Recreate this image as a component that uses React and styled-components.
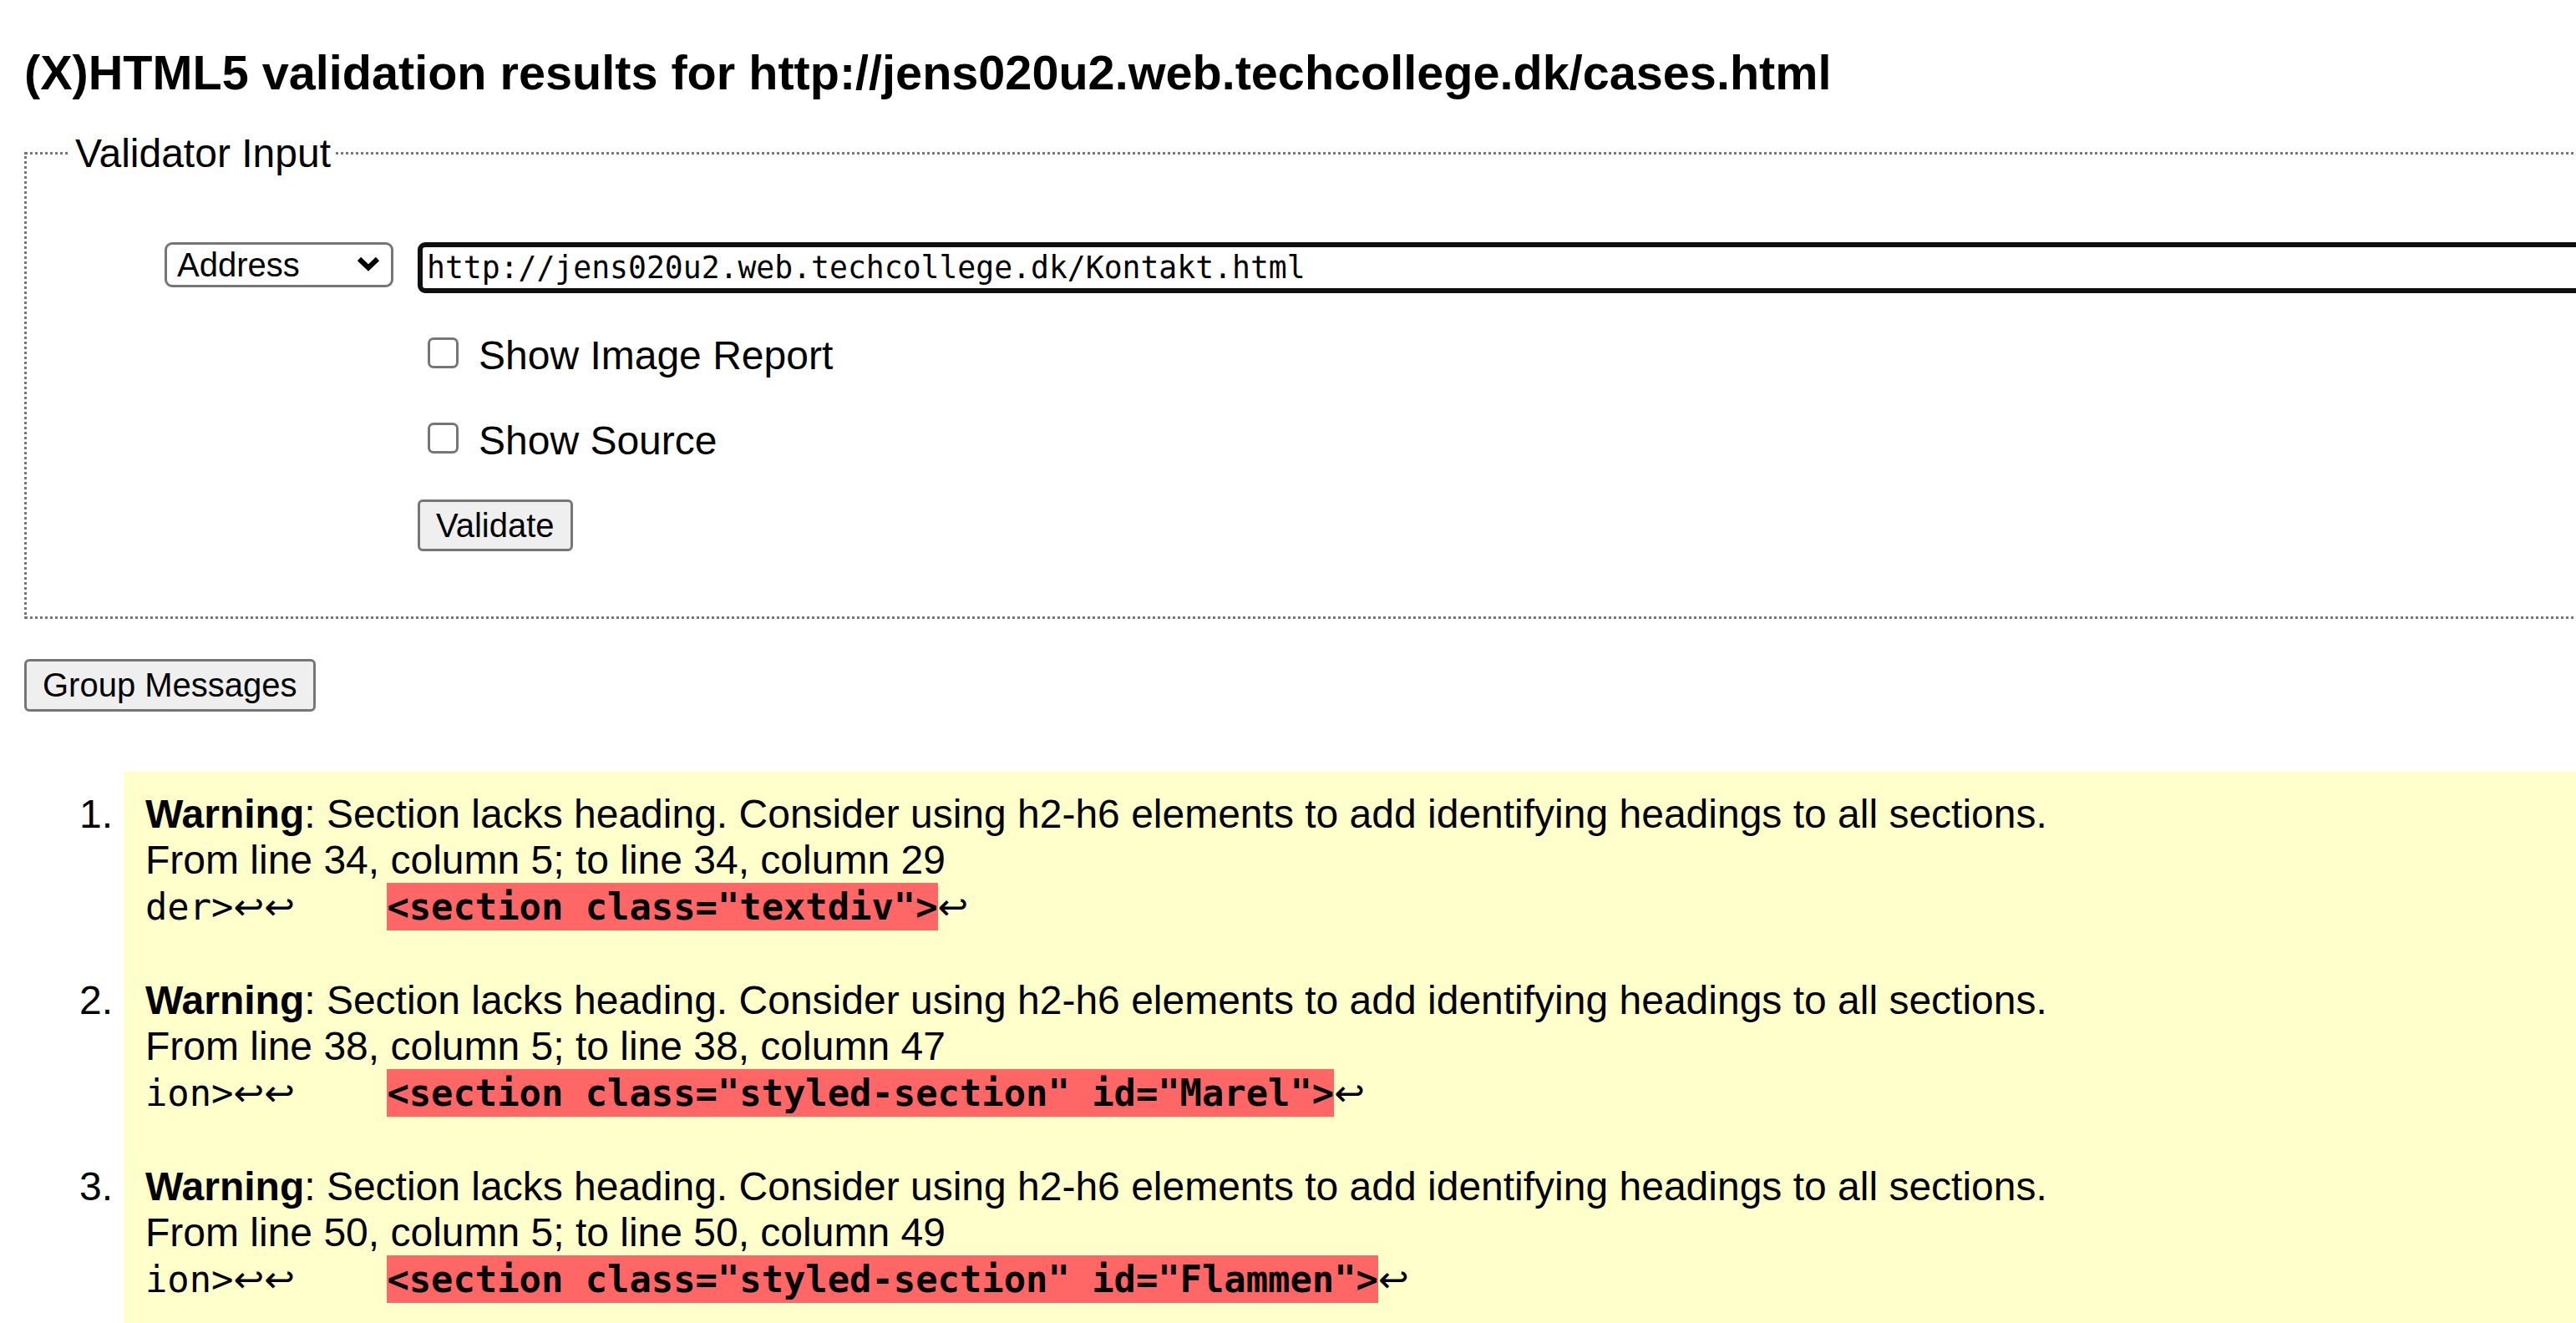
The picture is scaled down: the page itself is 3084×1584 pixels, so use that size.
import React from 'react';
import styled, { createGlobalStyle } from 'styled-components';

const GlobalStyle = createGlobalStyle`
  html, body {
    margin: 0;
    background: #fff;
    overflow: hidden;
  }
  body {
    font-family: "Liberation Sans", Arial, sans-serif;
    color: #000;
  }
`;

const Page = styled.div`
  width: 3400px;
  box-sizing: border-box;
  padding: 55px 0 0 29px;
`;

const Title = styled.h2`
  margin: 0 0 37px;
  font-size: 57.6px;
  font-weight: bold;
  line-height: 64px;
`;

const Fieldset = styled.fieldset`
  margin: 0 29px 0 0;
  padding: 0 0 78px;
  border: 3px dotted #767676;
  min-width: 0;
`;

const Legend = styled.legend`
  margin-left: 52px;
  padding: 0 6px;
  font-size: 48px;
  line-height: 55px;
`;

const FormGrid = styled.div`
  display: grid;
  grid-template-columns: auto 1fr;
  column-gap: 29px;
  align-items: start;
  padding: 79px 0 0 165px;
`;

const SelectWrap = styled.div`
  position: relative;
  width: 274px;
  height: 54px;
`;

const Select = styled.select`
  appearance: none;
  width: 100%;
  height: 100%;
  box-sizing: border-box;
  padding: 0 0 0 12px;
  border: 3px solid #767676;
  border-radius: 9px;
  background: #fff;
  color: #000;
  font-family: "Liberation Sans", Arial, sans-serif;
  font-size: 40px;
`;

const Chevron = styled.svg`
  position: absolute;
  top: 17px;
  right: 16px;
  width: 28px;
  height: 18px;
  pointer-events: none;
`;

const Controls = styled.div`
  display: flex;
  flex-direction: column;
  align-items: stretch;
`;

const AddressInput = styled.input`
  width: 100%;
  height: 61px;
  box-sizing: border-box;
  padding: 0 5px;
  border: 6px solid #101010;
  border-radius: 9px;
  outline: none;
  background: #fff;
  color: #000;
  font-family: "DejaVu Sans Mono", "Liberation Mono", monospace;
  font-size: 36.4px;
`;

const CheckRow = styled.label`
  display: flex;
  align-items: flex-start;
  height: 55px;
  margin-top: 47px;
  font-size: 48px;
  line-height: 55px;
`;

const Checkbox = styled.input.attrs({ type: 'checkbox' })`
  appearance: none;
  flex: none;
  width: 37px;
  height: 37px;
  box-sizing: border-box;
  margin: 6px 24px 0 12px;
  border: 3px solid #767676;
  border-radius: 7px;
  background: #fff;
`;

const Button = styled.button`
  align-self: flex-start;
  height: ${(p) => p.$height || 62}px;
  margin-top: ${(p) => p.$top || 0}px;
  padding: 0 19px;
  border: 3px solid #767676;
  border-radius: 6px;
  background: #efefef;
  color: #000;
  font-family: "Liberation Sans", Arial, sans-serif;
  font-size: 40px;
`;

const Messages = styled.ol`
  list-style: none;
  margin: 72px 0 0;
  padding: 0;
`;

const Item = styled.li`
  display: flex;
`;

const Number = styled.div`
  flex: none;
  width: 119px;
  box-sizing: border-box;
  padding: 23px 13px 0 0;
  text-align: right;
  font-size: 48px;
  line-height: 55px;
`;

const Body = styled.div`
  flex: 1;
  background: #ffffcc;
  padding: 23px 24px 33px 26px;
  font-size: 48px;
`;

const Line = styled.div`
  line-height: 55px;
  white-space: nowrap;
`;

const Extract = styled.div`
  font-family: "DejaVu Sans Mono", "Liberation Mono", monospace;
  font-size: 43.8px;
  line-height: 57px;
  white-space: pre;
`;

const Mark = styled.b`
  display: inline-block;
  margin-left: 5px;
  background: #ff6666;
  font-weight: bold;
`;

// the line-break arrows fall back to a proportional font in the original
const Return = styled.span`
  font-family: "DejaVu Sans", sans-serif;
  font-weight: normal;
`;

const messages = [
  {
    from: 'From line 34, column 5; to line 34, column 29',
    before: 'der>',
    mark: '<section class="textdiv">',
  },
  {
    from: 'From line 38, column 5; to line 38, column 47',
    before: 'ion>',
    mark: '<section class="styled-section" id="Marel">',
  },
  {
    from: 'From line 50, column 5; to line 50, column 49',
    before: 'ion>',
    mark: '<section class="styled-section" id="Flammen">',
  },
];

const App = () => (
  <Page>
    <GlobalStyle />
    <Title>(X)HTML5 validation results for http://jens020u2.web.techcollege.dk/cases.html</Title>
    <Fieldset>
      <Legend>Validator Input</Legend>
      <FormGrid>
        <SelectWrap>
          <Select defaultValue="address">
            <option value="address">Address</option>
            <option value="file">File Upload</option>
            <option value="text">Text Field</option>
          </Select>
          <Chevron viewBox="0 0 28 18">
            <polyline points="3,3 14,13.5 25,3" fill="none" stroke="#000" strokeWidth="6" />
          </Chevron>
        </SelectWrap>
        <Controls>
          <AddressInput defaultValue="http://jens020u2.web.techcollege.dk/Kontakt.html" />
          <CheckRow>
            <Checkbox />
            Show Image Report
          </CheckRow>
          <CheckRow>
            <Checkbox />
            Show Source
          </CheckRow>
          <Button $top={43}>Validate</Button>
        </Controls>
      </FormGrid>
    </Fieldset>
    <Button $top={48} $height={63}>Group Messages</Button>
    <Messages>
      {messages.map((m, i) => (
        <Item key={i}>
          <Number>{i + 1}.</Number>
          <Body>
            <Line>
              <b>Warning</b>: Section lacks heading. Consider using h2-h6 elements to add identifying headings to all sections.
            </Line>
            <Line>{m.from}</Line>
            <Extract>
              {m.before}
              <Return>↩↩</Return>
              {'    '}
              <Mark>{m.mark}</Mark>
              <Return>↩</Return>
            </Extract>
          </Body>
        </Item>
      ))}
    </Messages>
  </Page>
);

export default App;
